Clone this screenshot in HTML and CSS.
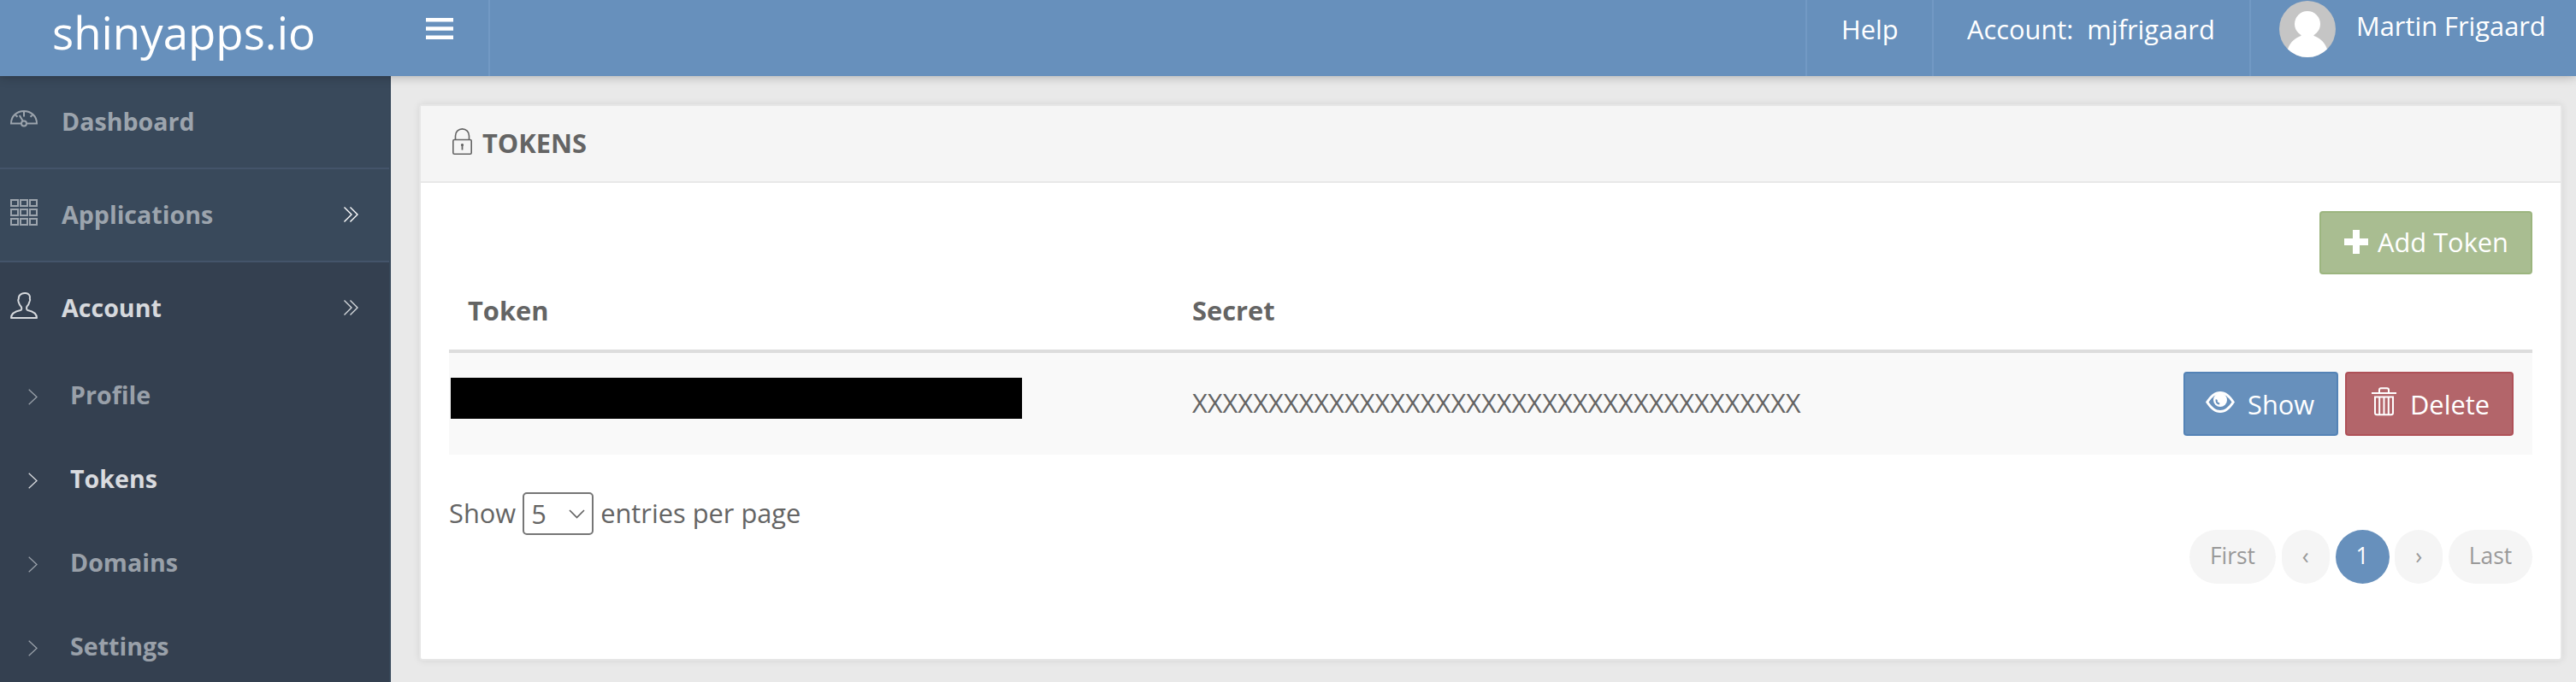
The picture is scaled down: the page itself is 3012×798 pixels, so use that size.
FILE: index.html
```html
<!DOCTYPE html>
<html lang="en">
<head>
<meta charset="utf-8">
<title>shinyapps.io - Tokens</title>
<link rel="stylesheet" href="styles.css">
</head>
<body>
<header class="topbar">
  <a class="brand">shinyapps.io</a>
  <div class="toggle"><svg class="burger" width="32" height="25" viewBox="0 0 32 25"><path d="M0 0h32v4.500H0zM0 10.200h32v4.500H0zM0 20.500h32V25H0z" fill="#fff"/></svg></div>
  <nav class="topnav">
    <a class="topitem help">Help</a>
    <a class="topitem acct">Account:&nbsp; mjfrigaard</a>
    <a class="topitem user">
      <svg class="avatar" width="66" height="66" viewBox="0 0 66 66"><defs><clipPath id="round"><circle cx="33" cy="33" r="33"/></clipPath></defs><g clip-path="url(#round)"><path fill="#c5c5c5" d="M0 0h66v66H0z"/><circle cx="33" cy="27" r="15" fill="#fff"/><path fill="#fff" d="M25.500 39h15c-.5 1.500 0 2 1.500 2.600C49 44.500 54.500 50.500 56 57v10H10V57c1.500-6.500 7-12.500 14-15.400 1.500-.6 2-1.100 1.500-2.600z"/></g></svg>
      <span class="username">Martin Frigaard</span>
    </a>
  </nav>
</header>
<div class="layout">
  <aside class="sidebar">
    <a class="item">
      <svg class="icon gauge" width="32" height="32" viewBox="0 0 32 32" fill="none" stroke="currentColor" stroke-width="2"><path d="M12.500 23.500H1C1 15 7.500 9 16 9s15 6 15 14.500H19.500M16 9v6.500M14.700 20.500L10.800 14M6 13.500l2.500 2.300M26 13.500l-2.500 2.300"/><circle cx="16" cy="23.500" r="3"/></svg>
      <span class="label">Dashboard</span>
    </a>
    <a class="item">
      <svg class="icon" width="32" height="32" viewBox="0 0 32 32" fill="none" stroke="currentColor" stroke-width="2"><path d="M1 2h8v7H1zM12 2h8v7h-8zM23 2h8v7h-8zM1 13h8v7H1zM12 13h8v7h-8zM23 13h8v7h-8zM1 24h8v7H1zM12 24h8v7h-8zM23 24h8v7h-8z"/></svg>
      <span class="label">Applications</span>
      <svg class="more" width="17" height="18" viewBox="0 0 17 18" fill="none" stroke="#fff" stroke-width="1.400"><path d="M.5.500L9 9 .5 17.500M7.500.500L16 9l-8.500 8.500"/></svg>
    </a>
    <a class="item open">
      <svg class="icon" width="32" height="32" viewBox="0 0 32 32" fill="none" stroke="currentColor" stroke-width="2" stroke-linejoin="round"><path d="M1 31c0-4.500 4.500-7.700 11-9 1.500-.4 1.600-2.700.8-4-2-1.600-2.600-4-3.200-6-.8-1.500-.4-2.500.2-3.300C9.500 4.500 12 3.300 13.500 2.700c2.500-1.200 7-.9 8.500 1.300 1.500 1.500 1 2.500.8 4.500.6 1 .5 2.500-.3 3.500-.5 2-1.300 4-3 5.500-.7 1.500-.6 4.100.8 4.500C26.500 23.300 31 26.500 31 31z"/></svg>
      <span class="label">Account</span>
      <svg class="more" width="17" height="18" viewBox="0 0 17 18" fill="none" stroke="#d6d9dd" stroke-width="1.400"><path d="M.5.500L9 9 .5 17.500M7.500.500L16 9l-8.500 8.500"/></svg>
    </a>
    <div class="submenu">
      <a class="sub"><svg class="arrow" width="11" height="19" viewBox="0 0 11 19"><path d="M.7.700L10 9.500.7 18.300" fill="none" stroke="currentColor" stroke-width="1.300"/></svg>Profile</a>
      <a class="sub active"><svg class="arrow" width="11" height="19" viewBox="0 0 11 19"><path d="M.7.700L10 9.500.7 18.300" fill="none" stroke="currentColor" stroke-width="1.300"/></svg>Tokens</a>
      <a class="sub"><svg class="arrow" width="11" height="19" viewBox="0 0 11 19"><path d="M.7.700L10 9.500.7 18.300" fill="none" stroke="currentColor" stroke-width="1.300"/></svg>Domains</a>
      <a class="sub"><svg class="arrow" width="11" height="19" viewBox="0 0 11 19"><path d="M.7.700L10 9.500.7 18.300" fill="none" stroke="currentColor" stroke-width="1.300"/></svg>Settings</a>
    </div>
  </aside>
  <main class="content">
    <section class="panel">
      <h1 class="panel-title">
        <svg class="lock" width="23" height="31" viewBox="0 0 23 31" fill="none" stroke="#646464" stroke-width="1.600"><rect x=".8" y="13.500" width="21.400" height="16.700" rx="1.500"/><path d="M3.500 13V9C3.500 4.300 7 .9 11.500.9s8 3.400 8 8.100v4"/><path d="M11.500 19v6.500" stroke-width="1.800"/><circle cx="11.500" cy="19.500" r="1" fill="#646464" stroke-width="1.200"/></svg>
        <span>TOKENS</span>
      </h1>
      <div class="panel-body">
        <div class="actions"><button class="btn add"><svg width="28" height="28" viewBox="0 0 28 28"><path d="M10 0h8v10h10v8H18v10h-8V18H0v-8h10z" fill="#fff"/></svg><span>Add Token</span></button></div>
        <div class="row head"><span>Token</span><span class="secret">Secret</span></div>
        <div class="row data">
          <span class="redacted"></span>
          <span class="secret xs">XXXXXXXXXXXXXXXXXXXXXXXXXXXXXXXXXXXXXXXX</span>
          <div class="buttons">
            <button class="btn show"><svg width="34" height="25" viewBox="0 0 34 25"><path fill="#fff" d="M0 12.500C5 4.500 10.500 0 17 0s12 4.500 17 12.500C29 20.500 23.500 25 17 25S5 20.500 0 12.500z"/><path fill="#6790bc" d="M3.500 12.500C8 6 12 3 17 3s9 3 13.500 9.500C26 19 22 22 17 22S8 19 3.500 12.500z"/><circle cx="17" cy="10" r="8" fill="#fff"/><path d="M12.800 9.500c-1 2.500.8 4.700 3.400 5" fill="none" stroke="#6790bc" stroke-width="2.200"/></svg><span>Show</span></button>
            <button class="btn del"><svg width="29" height="34" viewBox="0 0 29 34" fill="none" stroke="#fff" stroke-width="2"><path d="M0 7h29M9 6.500V3.300C9 2 9.800 1.200 11 1.200h7c1.200 0 2 .8 2 2.100v3.200M4 11.500v18.500c0 1.500.8 2.300 2.300 2.300h16.400c1.500 0 2.300-.8 2.300-2.300V11.500zM9.200 12v20M14.500 12v20M19.800 12v20"/></svg><span>Delete</span></button>
          </div>
        </div>
        <div class="footer">
          <div class="length"><span>Show</span><span class="select">5<svg width="19" height="11" viewBox="0 0 19 11"><path d="M1 1l8.500 8.500L18 1" fill="none" stroke="#646464" stroke-width="1.700"/></svg></span><span>entries per page</span></div>
          <div class="pages"><a class="page first">First</a><a class="page prev">‹</a><a class="page current">1</a><a class="page next">›</a><a class="page last">Last</a></div>
        </div>
      </div>
    </section>
  </main>
</div>
</body>
</html>
```
FILE: styles.css
```css
* { box-sizing: border-box; }
html, body { margin: 0; height: 798px; overflow: hidden; }
body {
  font-family: "Open Sans", sans-serif;
  font-size: 30.8px;
  color: #646464;
  background: #e9e9e9;
  display: flex;
  flex-direction: column;
}
svg { display: block; flex: none; }
.topbar {
  display: flex;
  flex: none;
  height: 89px;
  background: #6790bc;
  color: #fff;
  box-shadow: 0 0 12px rgba(0, 0, 0, .3);
  position: relative;
  z-index: 2;
}
.brand { width: 457px; padding-left: 61px; font-size: 52.8px; line-height: 76px; white-space: nowrap; }
.toggle { width: 116px; padding: 21px 0 0 41px; border-right: 2px solid #7299c4; }
.topnav { display: flex; margin-left: auto; }
.topitem { border-left: 2px solid #7299c4; line-height: 68px; white-space: nowrap; }
.help { width: 148px; padding-left: 40px; }
.acct { width: 371px; padding-left: 39px; }
.user { width: 382px; display: flex; padding: 1px 0 0 33px; }
.username { padding-left: 24px; line-height: 58px; }
.layout { display: flex; flex: 1; min-height: 0; }
.sidebar {
  width: 457px;
  flex: none;
  background: #39495b;
  border-right: 2px solid #364759;
  font-size: 28.6px;
  font-weight: 700;
  color: #9ca4ad;
  overflow: hidden;
}
.item { display: flex; height: 109px; padding-left: 12px; border-bottom: 2px solid #44546a; line-height: 106px; }
.icon { margin-top: 34px; }
.gauge { margin-top: 32px; }
.item .label { flex: 1; padding-left: 28px; }
.more { margin: 44px 36px 0 0; }
.open { height: 106px; border: 0; background: #344050; color: #d6d9dd; }
.submenu { background: #344050; height: 400px; }
.sub { display: flex; align-items: center; height: 98px; padding-left: 33px; line-height: 98px; color: #99a0a9; }
.arrow { margin: 4px 38px 0 0; }
.sub.active { color: #d9dbdf; }
.content { flex: 1; padding: 33px 16px 25px 33px; }
.panel {
  height: 651px;
  background: #fff;
  border: 2px solid #e6e6e6;
  border-radius: 4px;
  box-shadow: 0 0 8px rgba(0, 0, 0, .09);
}
.panel-title {
  display: flex;
  height: 90px;
  margin: 0;
  padding-left: 37px;
  background: #f5f5f5;
  border-bottom: 2px solid #e8e8e8;
  font-size: 30.8px;
  line-height: 86px;
}
.lock { margin: 26px 12px 0 0; }
.panel-body { padding: 33px; }
.actions { display: flex; justify-content: flex-end; }
.btn {
  display: flex;
  align-items: center;
  height: 75px;
  padding: 0;
  border: 2px solid;
  border-radius: 4px;
  font: inherit;
  line-height: 70px;
  color: #fff;
}
.add { width: 249px; height: 74px; padding: 0 0 2px 27px; gap: 11px; background: #a9bd91; border-color: #9cb57f; }
.row { display: flex; }
.head { height: 92px; padding-left: 22px; border-bottom: 4px solid #ddd; font-weight: 700; line-height: 85px; }
.head .secret { margin-left: auto; width: 1567px; }
.data { height: 119px; background: #f9f9f9; }
.redacted { width: 668px; height: 48px; margin: 29px 0 0 2px; background: #000; }
.xs { margin-left: 199px; line-height: 117px; }
.buttons { display: flex; gap: 8px; margin: 22px 22px 0 auto; }
.show { width: 181px; padding-left: 24px; gap: 15px; background: #6790bc; border-color: #5483b6; }
.show svg { margin-top: -4px; }
.del { width: 197px; padding-left: 29px; gap: 16px; background: #b3656a; border-color: #af5158; }
.del svg { margin-top: -6px; }
.footer { display: flex; justify-content: space-between; }
.length { display: flex; margin-top: 44px; line-height: 49px; }
.select {
  display: flex;
  justify-content: space-between;
  align-items: center;
  width: 83px;
  height: 50px;
  margin: 0 8px;
  padding: 0 8px;
  border: 2px solid #767676;
  border-radius: 5px;
}
.pages { display: flex; gap: 6.75px; margin-top: 88px; }
.page { height: 63px; border-radius: 32px; background: #f5f5f5; color: #999; font-size: 26.4px; line-height: 61px; text-align: center; }
.first { width: 101px; }
.prev, .next { width: 56px; }
.current { width: 63px; background: #6790bc; color: #fff; }
.last { width: 98px; }
```
